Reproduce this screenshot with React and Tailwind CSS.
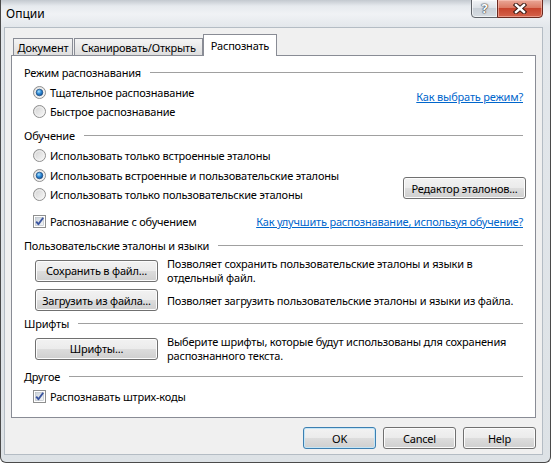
import React from "react";

const font = "font-['Noto_Sans',sans-serif]";

function Radio({ checked }) {
  return (
    <svg width="13" height="13" viewBox="0 0 13 13" className="shrink-0">
      <defs>
        <linearGradient id="rbg" x1="0" y1="0" x2="1" y2="1">
          <stop offset="0" stopColor="#cfcfcf" />
          <stop offset="1" stopColor="#fbfbfb" />
        </linearGradient>
        <radialGradient id="rdot" cx="0.4" cy="0.35" r="0.7">
          <stop offset="0" stopColor="#a9e2ff" />
          <stop offset="0.5" stopColor="#2f8ad6" />
          <stop offset="1" stopColor="#0d4a92" />
        </radialGradient>
      </defs>
      <circle cx="6.5" cy="6.5" r="6" fill="url(#rbg)" stroke="#8f8f8f" />
      <circle cx="6.5" cy="6.5" r="4.6" fill="none" stroke="#f4f4f4" strokeWidth="0.8" />
      {checked && <circle cx="6.5" cy="6.5" r="3.3" fill="url(#rdot)" stroke="#1c4c80" strokeWidth="0.7" />}
    </svg>
  );
}

function Check() {
  return (
    <svg width="13" height="13" viewBox="0 0 13 13" className="shrink-0">
      <defs>
        <linearGradient id="cbg" x1="0" y1="0" x2="1" y2="1">
          <stop offset="0" stopColor="#cbd3db" />
          <stop offset="1" stopColor="#f4f6f8" />
        </linearGradient>
      </defs>
      <rect x="0.5" y="0.5" width="12" height="12" fill="#fff" stroke="#8e8f8f" />
      <rect x="2.5" y="2.5" width="8" height="8" fill="url(#cbg)" stroke="#b3b9c0" strokeWidth="0.6" />
      <path d="M3.2 6.6 L5.4 9.2 L10.2 2.8" fill="none" stroke="#3b55a0" strokeWidth="1.9" strokeLinejoin="round" />
    </svg>
  );
}

function Btn({ children, className = "", def = false }) {
  return (
    <div
      className={`h-[22px] flex items-center justify-center rounded-[3px] border whitespace-nowrap text-black bg-[linear-gradient(#f2f2f2_0%,#ebebeb_50%,#dddddd_50%,#cfcfcf_100%)] ${
        def
          ? "border-[#3c7fb1] shadow-[inset_0_0_0_1px_#c4e5f6]"
          : "border-[#707070] shadow-[inset_0_0_0_1px_#fcfcfc]"
      } ${className}`}
    >
      {children}
    </div>
  );
}

function Header({ children, className = "" }) {
  return (
    <div className={`flex items-center h-[15px] gap-[9px] ${className}`}>
      <span className="whitespace-nowrap">{children}</span>
      <div className="flex-1 h-px bg-[#a0a0a0]" />
    </div>
  );
}

function Opt({ children, checked, radio = true, className = "" }) {
  return (
    <div className={`flex items-center h-[15px] gap-[4px] ml-[9px] ${className}`}>
      {radio ? <Radio checked={checked} /> : <Check />}
      <span className="whitespace-nowrap">{children}</span>
    </div>
  );
}

export default function App() {
  return (
    <div
      className={`${font} w-[551px] h-[463px] flex flex-col overflow-hidden border-x border-b border-[#4a4a4a] rounded-b-[6px] bg-[linear-gradient(180deg,#c3c9cf_0px,#e6eaee_6px,#f0f2f5_14px,#e3e7eb_27px,#dde2e6_100%)] text-[11px] leading-[15px] tracking-[-0.2px] text-black`}
    >
      <div className="h-[27px] flex items-start shrink-0">
        <span className="mt-[6px] ml-[5px] text-[12px] leading-[15px] tracking-normal">Опции</span>
        <div className="ml-auto mr-[7px] flex -mt-px">
          <div className="w-[27px] h-[19px] flex items-center justify-center rounded-bl-[4px] border border-[#5f6369] bg-[linear-gradient(#f3f5f7_0%,#dde2e7_45%,#c9d0d7_50%,#d6dce2_100%)] shadow-[inset_0_0_0_1px_rgba(255,255,255,0.6)]">
            <span className="text-[13px] leading-none font-bold text-white [text-shadow:0_0_1px_#333,0_0_1px_#333,0_0_2px_#555]">?</span>
          </div>
          <div className="w-[46px] h-[19px] -ml-px flex items-center justify-center rounded-br-[4px] border border-[#6b2a20] bg-[linear-gradient(#eaa797_0%,#dc7a64_45%,#c7442d_50%,#d4624b_100%)] shadow-[inset_0_0_0_1px_rgba(255,210,200,0.5)]">
            <svg width="14" height="11" viewBox="0 0 14 11">
              <path d="M3 2 L11 9 M11 2 L3 9" stroke="#3a1a14" strokeWidth="4.4" strokeLinecap="square" />
              <path d="M3 2 L11 9 M11 2 L3 9" stroke="#ffffff" strokeWidth="2.4" strokeLinecap="square" />
            </svg>
          </div>
        </div>
      </div>

      <div className="ml-[3px] w-[539px] h-[428px] shrink-0 bg-[#f0f0f0] border border-[#b4bcc4] px-[6px] pt-[6px] flex flex-col">
        <div className="h-[21px] flex items-end pl-[2px] shrink-0 whitespace-nowrap">
          <div className="w-[60px] h-[17px] flex items-center justify-center border border-b-0 border-[#898c95] bg-[linear-gradient(#f4f4f4,#dedede)]">
            Документ
          </div>
          <div className="w-[129px] h-[17px] ml-px flex items-center justify-center border border-b-0 border-[#898c95] bg-[linear-gradient(#f4f4f4,#dedede)]">
            Сканировать/Открыть
          </div>
          <div className="w-[74px] h-[22px] -mb-px relative z-10 flex items-start justify-center pt-[3px] border border-b-0 border-[#898c95] bg-white">
            Распознать
          </div>
        </div>

        <div className="w-[525px] h-[363px] shrink-0 border border-[#898c95] bg-white px-[12px] pt-[9px] flex flex-col">
          <Header>Режим распознавания</Header>
          <div className="flex mt-[5px]">
            <div className="flex flex-col">
              <Opt checked>Тщательное распознавание</Opt>
              <Opt className="mt-[4px]">Быстрое распознавание</Opt>
            </div>
            <span className="ml-auto mt-[4px] text-[#0066cc] underline whitespace-nowrap">Как выбрать режим?</span>
          </div>

          <Header className="mt-[9px]">Обучение</Header>
          <div className="flex items-end mt-[5px]">
            <div className="flex flex-col">
              <Opt>Использовать только встроенные эталоны</Opt>
              <Opt checked className="mt-[5px]">Использовать встроенные и пользовательские эталоны</Opt>
              <Opt className="mt-[4px]">Использовать только пользовательские эталоны</Opt>
            </div>
            <Btn className="ml-auto w-[123px] mb-[3px] -mr-[3px]">Редактор эталонов...</Btn>
          </div>
          <div className="flex items-center mt-[12px]">
            <Opt radio={false}>Распознавание с обучением</Opt>
            <span className="ml-auto text-[#0066cc] underline whitespace-nowrap">
              Как улучшить распознавание, используя обучение?
            </span>
          </div>

          <Header className="mt-[9px]">Пользовательские эталоны и языки</Header>
          <div className="flex items-center mt-[4px] h-[28px] leading-[14px]">
            <Btn className="w-[123px] ml-[11px] shrink-0">Сохранить в файл...</Btn>
            <div className="ml-[9px] whitespace-nowrap">
              Позволяет сохранить пользовательские эталоны и языки в
              <br />
              отдельный файл.
            </div>
          </div>
          <div className="flex items-center mt-[4px] h-[22px]">
            <Btn className="w-[123px] ml-[11px] shrink-0">Загрузить из файла...</Btn>
            <div className="ml-[9px] whitespace-nowrap">Позволяет загрузить пользовательские эталоны и языки из файла.</div>
          </div>

          <Header className="mt-[5px]">Шрифты</Header>
          <div className="flex items-center mt-[4px] h-[28px] leading-[14px]">
            <Btn className="w-[123px] ml-[11px] shrink-0">Шрифты...</Btn>
            <div className="ml-[9px] whitespace-nowrap">
              Выберите шрифты, которые будут использованы для сохранения
              <br />
              распознанного текста.
            </div>
          </div>

          <Header className="mt-[6px]">Другое</Header>
          <Opt radio={false} className="mt-[5px]">Распознавать штрих-коды</Opt>
        </div>

        <div className="flex justify-end gap-[7px] mt-[9px]">
          <Btn def className="w-[73px]">OK</Btn>
          <Btn className="w-[73px]">Cancel</Btn>
          <Btn className="w-[73px]">Help</Btn>
        </div>
      </div>
    </div>
  );
}
